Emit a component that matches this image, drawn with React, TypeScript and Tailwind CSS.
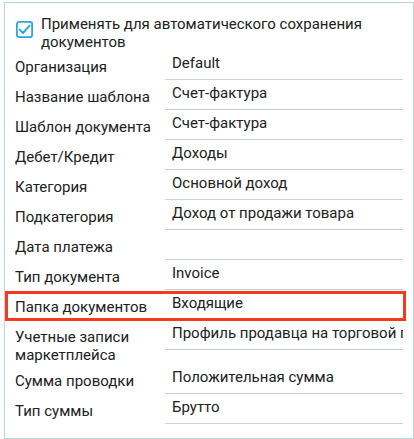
const rows: { label: string; value: string; highlight?: boolean }[] = [
  { label: "Организация", value: "Default" },
  { label: "Название шаблона", value: "Счет-фактура" },
  { label: "Шаблон документа", value: "Счет-фактура" },
  { label: "Дебет/Кредит", value: "Доходы" },
  { label: "Категория", value: "Основной доход" },
  { label: "Подкатегория", value: "Доход от продажи товара" },
  { label: "Дата платежа", value: "" },
  { label: "Тип документа", value: "Invoice" },
  { label: "Папка документов", value: "Входящие", highlight: true },
  { label: "Учетные записи маркетплейса", value: "Профиль продавца на торговой площадке" },
  { label: "Сумма проводки", value: "Положительная сумма" },
  { label: "Тип суммы", value: "Брутто" },
];

function CheckIcon() {
  return (
    <svg width="17" height="17" viewBox="0 0 17 17" className="shrink-0">
      <rect x="0.9" y="0.9" width="15.2" height="15.2" rx="2.2" fill="none" stroke="#2aa6e2" strokeWidth="1.8" />
      <path d="M3.6 8.6 L7 12 L13.6 4.6" fill="none" stroke="#2aa6e2" strokeWidth="1.9" strokeLinecap="round" strokeLinejoin="round" />
    </svg>
  );
}

export default function App() {
  return (
    <div
      className="w-[414px] h-[439px] bg-white pt-[2px] pl-[4px] text-[15px] text-[#212121]"
      style={{ fontFamily: "Roboto, 'Noto Sans', sans-serif" }}
    >
      <div className="w-[410px] h-[437px] border border-[#b9d6de] pt-[12px] pl-[10px] pr-[10px]">
        {/* Auto-save checkbox */}
        <div className="flex items-start gap-[8px]">
          <div className="mt-[6px] ml-[1px]">
            <CheckIcon />
          </div>
          <div className="leading-[18px]">
            Применять для автоматического сохранения
            <br />
            документов
          </div>
        </div>

        {/* Template fields */}
        <div className="-mt-px flex flex-col">
          {rows.map((r) => (
            <div key={r.label} className="relative flex items-start">
              <div className="w-[150px] shrink-0 pt-[8px] leading-[18px] pr-2">{r.label}</div>
              <div className="flex-1 min-w-0 h-[30px] border-b border-[#c9d1d5] pl-[7px] pt-[4px] leading-[18px] overflow-hidden whitespace-nowrap">
                {r.value}
              </div>
              {r.highlight && (
                <div className="absolute left-[-10px] top-[1px] w-[401px] h-[30px] border-[3px] border-[#f53a1d] pointer-events-none" />
              )}
            </div>
          ))}
        </div>
      </div>
    </div>
  );
}
